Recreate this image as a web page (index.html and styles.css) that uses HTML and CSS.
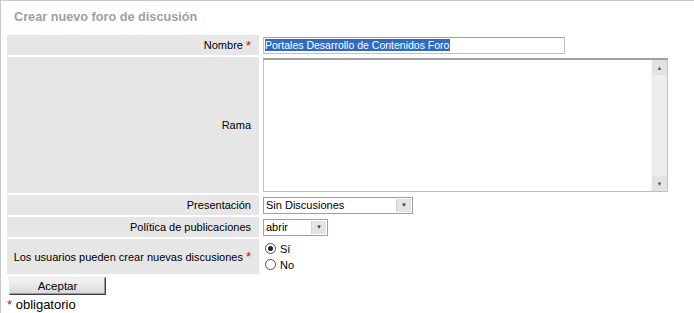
FILE: index.html
```html
<!DOCTYPE html>
<html lang="es">
<head>
    <meta charset="UTF-8">
    <title>Crear nuevo foro de discusión</title>
    <link rel="stylesheet" href="styles.css">
</head>
<body>
    <div class="panel">
        <h2 class="panel-title">Crear nuevo foro de discusión</h2>

        <form class="form-grid">
            <div class="label">Nombre <span class="req">*</span></div>
            <div class="field">
                <div class="text-input"><span class="selected">Portales Desarrollo de Contenidos Foro</span></div>
            </div>

            <div class="label">Rama</div>
            <div class="field">
                <div class="textarea-box">
                    <textarea class="textarea"></textarea>
                    <div class="vscroll">
                        <span class="scroll-btn">&#9650;</span>
                        <span class="scroll-track"></span>
                        <span class="scroll-btn">&#9660;</span>
                    </div>
                </div>
            </div>

            <div class="label">Presentación</div>
            <div class="field">
                <div class="select-box wide">
                    <span class="select-value">Sin Discusiones</span>
                    <span class="select-arrow">&#9660;</span>
                </div>
            </div>

            <div class="label">Política de publicaciones</div>
            <div class="field">
                <div class="select-box narrow">
                    <span class="select-value">abrir</span>
                    <span class="select-arrow">&#9660;</span>
                </div>
            </div>

            <div class="label tall">Los usuarios pueden crear nuevas discusiones <span class="req">*</span></div>
            <div class="field radios">
                <label class="radio"><span class="dot checked"></span>Sí</label>
                <label class="radio"><span class="dot"></span>No</label>
            </div>
        </form>

        <button class="submit" type="button">Aceptar</button>
        <p class="note"><span class="req">*</span> obligatorio</p>
    </div>
</body>
</html>
```

FILE: styles.css
```css
html, body {
    margin: 0;
    padding: 0;
    background: #fff;
}
body {
    font-family: "Liberation Sans", Arial, sans-serif;
    font-size: 11px;
    color: #000;
}
.panel {
    border-top: 1px solid #c8c8c8;
    border-left: 1px solid #c8c8c8;
    height: 313px;
    padding: 0 0 0 6px;
    box-sizing: border-box;
    overflow: hidden;
}
.panel-title {
    margin: 0;
    padding: 9px 0 0 7px;
    height: 25px;
    box-sizing: border-box;
    font-size: 12.7px;
    font-weight: bold;
    color: #a0a0a0;
}
.form-grid {
    display: grid;
    grid-template-columns: 252px 1fr;
    gap: 2px;
    margin: 9px 0 0 0;
    width: 679px;
}
.label {
    background: #e6e6e6;
    text-align: right;
    padding: 0 8px 0 0;
    display: flex;
    align-items: center;
    justify-content: flex-end;
    white-space: nowrap;
    font-size: 11px;
}
.req {
    color: #e00;
    font-size: 13px;
    margin-left: 3px;
    line-height: 1;
}
.field {
    display: flex;
    align-items: center;
    padding: 1px 0 1px 2px;
    min-height: 18px;
}
.text-input {
    width: 302px;
    height: 17px;
    box-sizing: border-box;
    border: 1px solid #c0c0c0;
    border-top-color: #a0a0a0;
    padding: 1px 1px;
    line-height: 13px;
    font-size: 10.5px;
}
.selected {
    background: #316ac5;
    color: #fff;
    padding-right: 1px;
}
.textarea-box {
    display: flex;
    width: 405px;
    height: 134px;
    box-sizing: border-box;
    border: 1px solid #c0c0c0;
    border-top: 2px solid #a0a0a0;
}
.textarea {
    flex: 1;
    border: none;
    resize: none;
    outline: none;
    margin: 0;
    padding: 0;
}
.vscroll {
    width: 15px;
    display: flex;
    flex-direction: column;
    background: #eeeeee;
    border-left: 1px solid #f4f4f4;
}
.scroll-btn {
    height: 15px;
    background: #e2e2e2;
    color: #606060;
    font-size: 6px;
    display: flex;
    align-items: center;
    justify-content: center;
}
.scroll-track {
    flex: 1;
}
.select-box {
    display: flex;
    height: 17px;
    box-sizing: border-box;
    border: 1px solid #a0a0a0;
    background: #fff;
}
.select-box.wide { width: 150px; }
.select-box.narrow { width: 65px; }
.select-value {
    flex: 1;
    padding: 0 2px;
    line-height: 15px;
    font-size: 11px;
}
.select-arrow {
    width: 14px;
    margin: 1px;
    background: #e4e4e4;
    border-left: 1px solid #d0d0d0;
    color: #404040;
    font-size: 6px;
    display: flex;
    align-items: center;
    justify-content: center;
}
.label.tall {
    min-height: 35px;
}
.radios {
    flex-direction: column;
    align-items: flex-start;
    justify-content: center;
    gap: 4px;
    padding-left: 4px;
}
.radio {
    display: flex;
    align-items: center;
    gap: 4px;
    line-height: 12px;
}
.dot {
    width: 9px;
    height: 9px;
    border: 1px solid #505050;
    border-radius: 50%;
    background: #fff;
    position: relative;
}
.dot.checked::after {
    content: "";
    position: absolute;
    left: 2px;
    top: 2px;
    width: 5px;
    height: 5px;
    border-radius: 50%;
    background: #222;
}
.submit {
    display: block;
    margin: 3px 0 0 2px;
    width: 97px;
    height: 18px;
    font-family: "Liberation Sans", Arial, sans-serif;
    font-size: 11.5px;
    color: #000;
    padding: 0;
    background: linear-gradient(#f4f4f4, #d8d8d8);
    border: 1px solid;
    border-color: #e8e8e8 #404040 #404040 #e8e8e8;
    box-shadow: inset -1px -1px 0 #999;
}
.note {
    margin: 2px 0 0 0;
    font-size: 13px;
}
.note .req {
    margin-left: 0;
}
```
